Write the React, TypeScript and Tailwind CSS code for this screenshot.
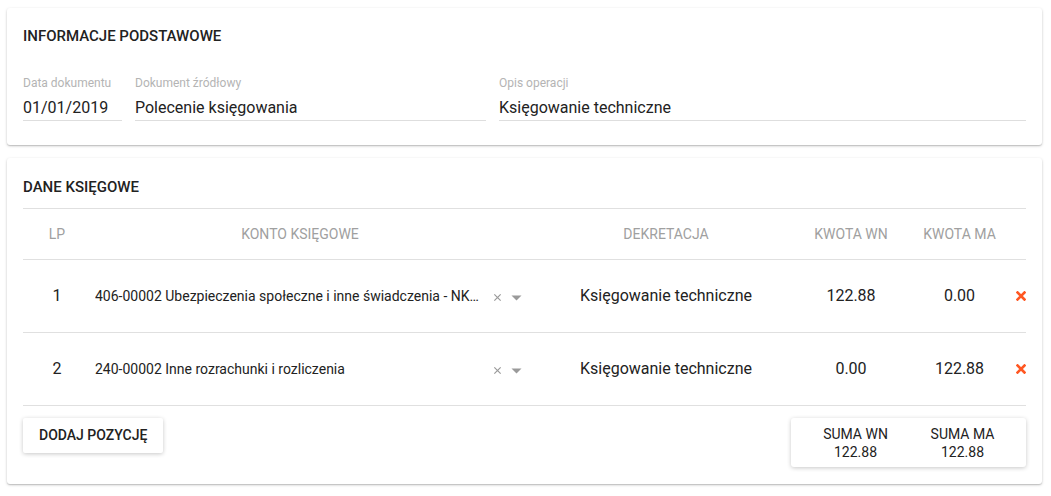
import React from "react";

const font = { fontFamily: "Roboto, 'Noto Sans', Arial, sans-serif" };

interface Row {
  lp: number;
  konto: string;
  dekretacja: string;
  wn: string;
  ma: string;
}

const ROWS: Row[] = [
  {
    lp: 1,
    konto: "406-00002 Ubezpieczenia społeczne i inne świadczenia - NKUP",
    dekretacja: "Księgowanie techniczne",
    wn: "122.88",
    ma: "0.00",
  },
  {
    lp: 2,
    konto: "240-00002 Inne rozrachunki i rozliczenia",
    dekretacja: "Księgowanie techniczne",
    wn: "0.00",
    ma: "122.88",
  },
];

function Field({ label, value, className }: { label: string; value: string; className: string }) {
  return (
    <div className={className}>
      <div className="text-[12px] leading-[16px] text-[#b4b4b4]">{label}</div>
      <div className="mt-[5px] h-[25px] border-b border-[#dedede] text-[16px] leading-[24px] text-[#222]">
        {value}
      </div>
    </div>
  );
}

function ClearIcon() {
  return (
    <svg width="9" height="9" viewBox="0 0 10 10" className="block">
      <path d="M1.5 1.5 L8.5 8.5 M8.5 1.5 L1.5 8.5" stroke="#9a9a9a" strokeWidth="1.3" />
    </svg>
  );
}

function Caret() {
  return (
    <svg width="11" height="6" viewBox="0 0 11 6" className="block">
      <path d="M0.5 0.5 L10.5 0.5 L5.5 5.5 Z" fill="#9a9a9a" />
    </svg>
  );
}

function DeleteIcon() {
  return (
    <svg width="10" height="10" viewBox="0 0 10 10" className="block">
      <path d="M1.5 1.5 L8.5 8.5 M8.5 1.5 L1.5 8.5" stroke="#ff5722" strokeWidth="2.6" strokeLinecap="square" />
    </svg>
  );
}

const grid = "grid grid-cols-[68px_446px_258px_112px_105px_14px]";

export default function App() {
  return (
    <div style={font} className="min-h-screen bg-white pl-[7px] pr-[9px] pt-[8px]">
      {/* Informacje podstawowe */}
      <div className="rounded-[3px] bg-white px-4 pb-[24px] pt-[18px] shadow-[0_1px_3px_rgba(0,0,0,0.2),0_1px_1px_rgba(0,0,0,0.12)]">
        <h2 className="text-[15px] font-medium leading-[20px] text-[#222]">INFORMACJE PODSTAWOWE</h2>
        <div className="mt-[29px] flex gap-[13px]">
          <Field label="Data dokumentu" value="01/01/2019" className="w-[99px]" />
          <Field label="Dokument źródłowy" value="Polecenie księgowania" className="w-[351px]" />
          <Field label="Opis operacji" value="Księgowanie techniczne" className="flex-1" />
        </div>
      </div>

      {/* Dane księgowe */}
      <div className="mt-[13px] rounded-[3px] bg-white px-4 pb-[17px] pt-[19px] shadow-[0_1px_3px_rgba(0,0,0,0.2),0_1px_1px_rgba(0,0,0,0.12)]">
        <h2 className="text-[15px] font-medium leading-[20px] text-[#222]">DANE KSIĘGOWE</h2>
        <div className="mt-[11px] border-t border-[#e0e0e0]">
          <div className={`${grid} h-[51px] items-center border-b border-[#e0e0e0] text-[14px] text-[#a0a0a0]`}>
            <div className="text-center">LP</div>
            <div className="pr-[28px] text-center">KONTO KSIĘGOWE</div>
            <div className="text-center">DEKRETACJA</div>
            <div className="text-center">KWOTA WN</div>
            <div className="text-center">KWOTA MA</div>
            <div />
          </div>
          {ROWS.map(r => (
            <div
              key={r.lp}
              className={`${grid} h-[73px] items-center border-b border-[#e0e0e0] text-[16px] text-[#222]`}
            >
              <div className="text-center">{r.lp}</div>
              <div className="flex items-center pl-[4px] pr-[14px]">
                <div className="w-[391px] truncate text-[14px] leading-[20px]">{r.konto}</div>
                <div className="ml-[7px] mt-[3px]">
                  <ClearIcon />
                </div>
                <div className="ml-[9px] mt-[3px]">
                  <Caret />
                </div>
              </div>
              <div className="text-center">{r.dekretacja}</div>
              <div className="text-center">{r.wn}</div>
              <div className="text-center">{r.ma}</div>
              <div className="flex justify-end">
                <DeleteIcon />
              </div>
            </div>
          ))}
        </div>

        <div className="mt-[12px] flex items-start justify-between">
          <button className="h-[35px] rounded-[2px] bg-white px-4 text-[14px] font-medium text-[#222] shadow-[0_1px_4px_rgba(0,0,0,0.22)]">
            DODAJ POZYCJĘ
          </button>
          <div className="flex h-[49px] w-[235px] items-center rounded-[3px] bg-white pl-[22px] shadow-[0_1px_4px_rgba(0,0,0,0.22)]">
            <div className="w-[85px] text-center text-[14px] leading-[18px] text-[#222]">
              <div>SUMA WN</div>
              <div>122.88</div>
            </div>
            <div className="ml-[22px] w-[85px] text-center text-[14px] leading-[18px] text-[#222]">
              <div>SUMA MA</div>
              <div>122.88</div>
            </div>
          </div>
        </div>
      </div>
    </div>
  );
}
